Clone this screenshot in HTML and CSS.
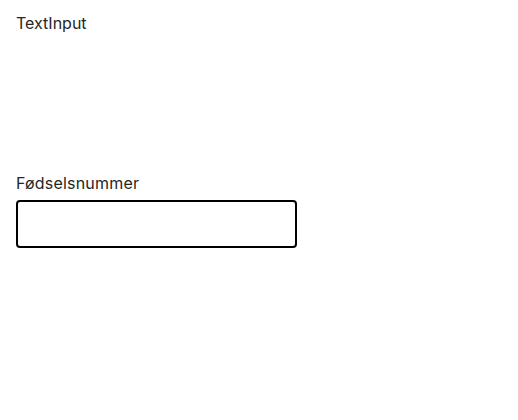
FILE: index.html
```html
<!DOCTYPE html>
<html>
<head>
<meta charset="utf-8">
<link rel="stylesheet" href="styles.css">
</head>
<body>
<div class="page">
  <div class="title">TextInput</div>
  <div class="field">
    <label class="label" for="fnr">Fødselsnummer</label>
    <input class="input" id="fnr" type="text">
  </div>
</div>
</body>
</html>
```
FILE: styles.css
```css
html, body {
  margin: 0;
  padding: 0;
  background: #fff;
}
.page {
  padding: 12px 16px;
  font-family: Inter, "Liberation Sans", sans-serif;
  color: #262626;
  font-size: 16px;
}
.title {
  line-height: 22px;
}
.field {
  margin-top: 138px;
  display: flex;
  flex-direction: column;
  gap: 6px;
}
.label {
  line-height: 22px;
  letter-spacing: 0.2px;
}
.input {
  box-sizing: border-box;
  width: 281px;
  height: 48px;
  border: 2px solid #000;
  border-radius: 4px;
  margin: 0;
  padding: 0 12px;
  font: inherit;
}
```
